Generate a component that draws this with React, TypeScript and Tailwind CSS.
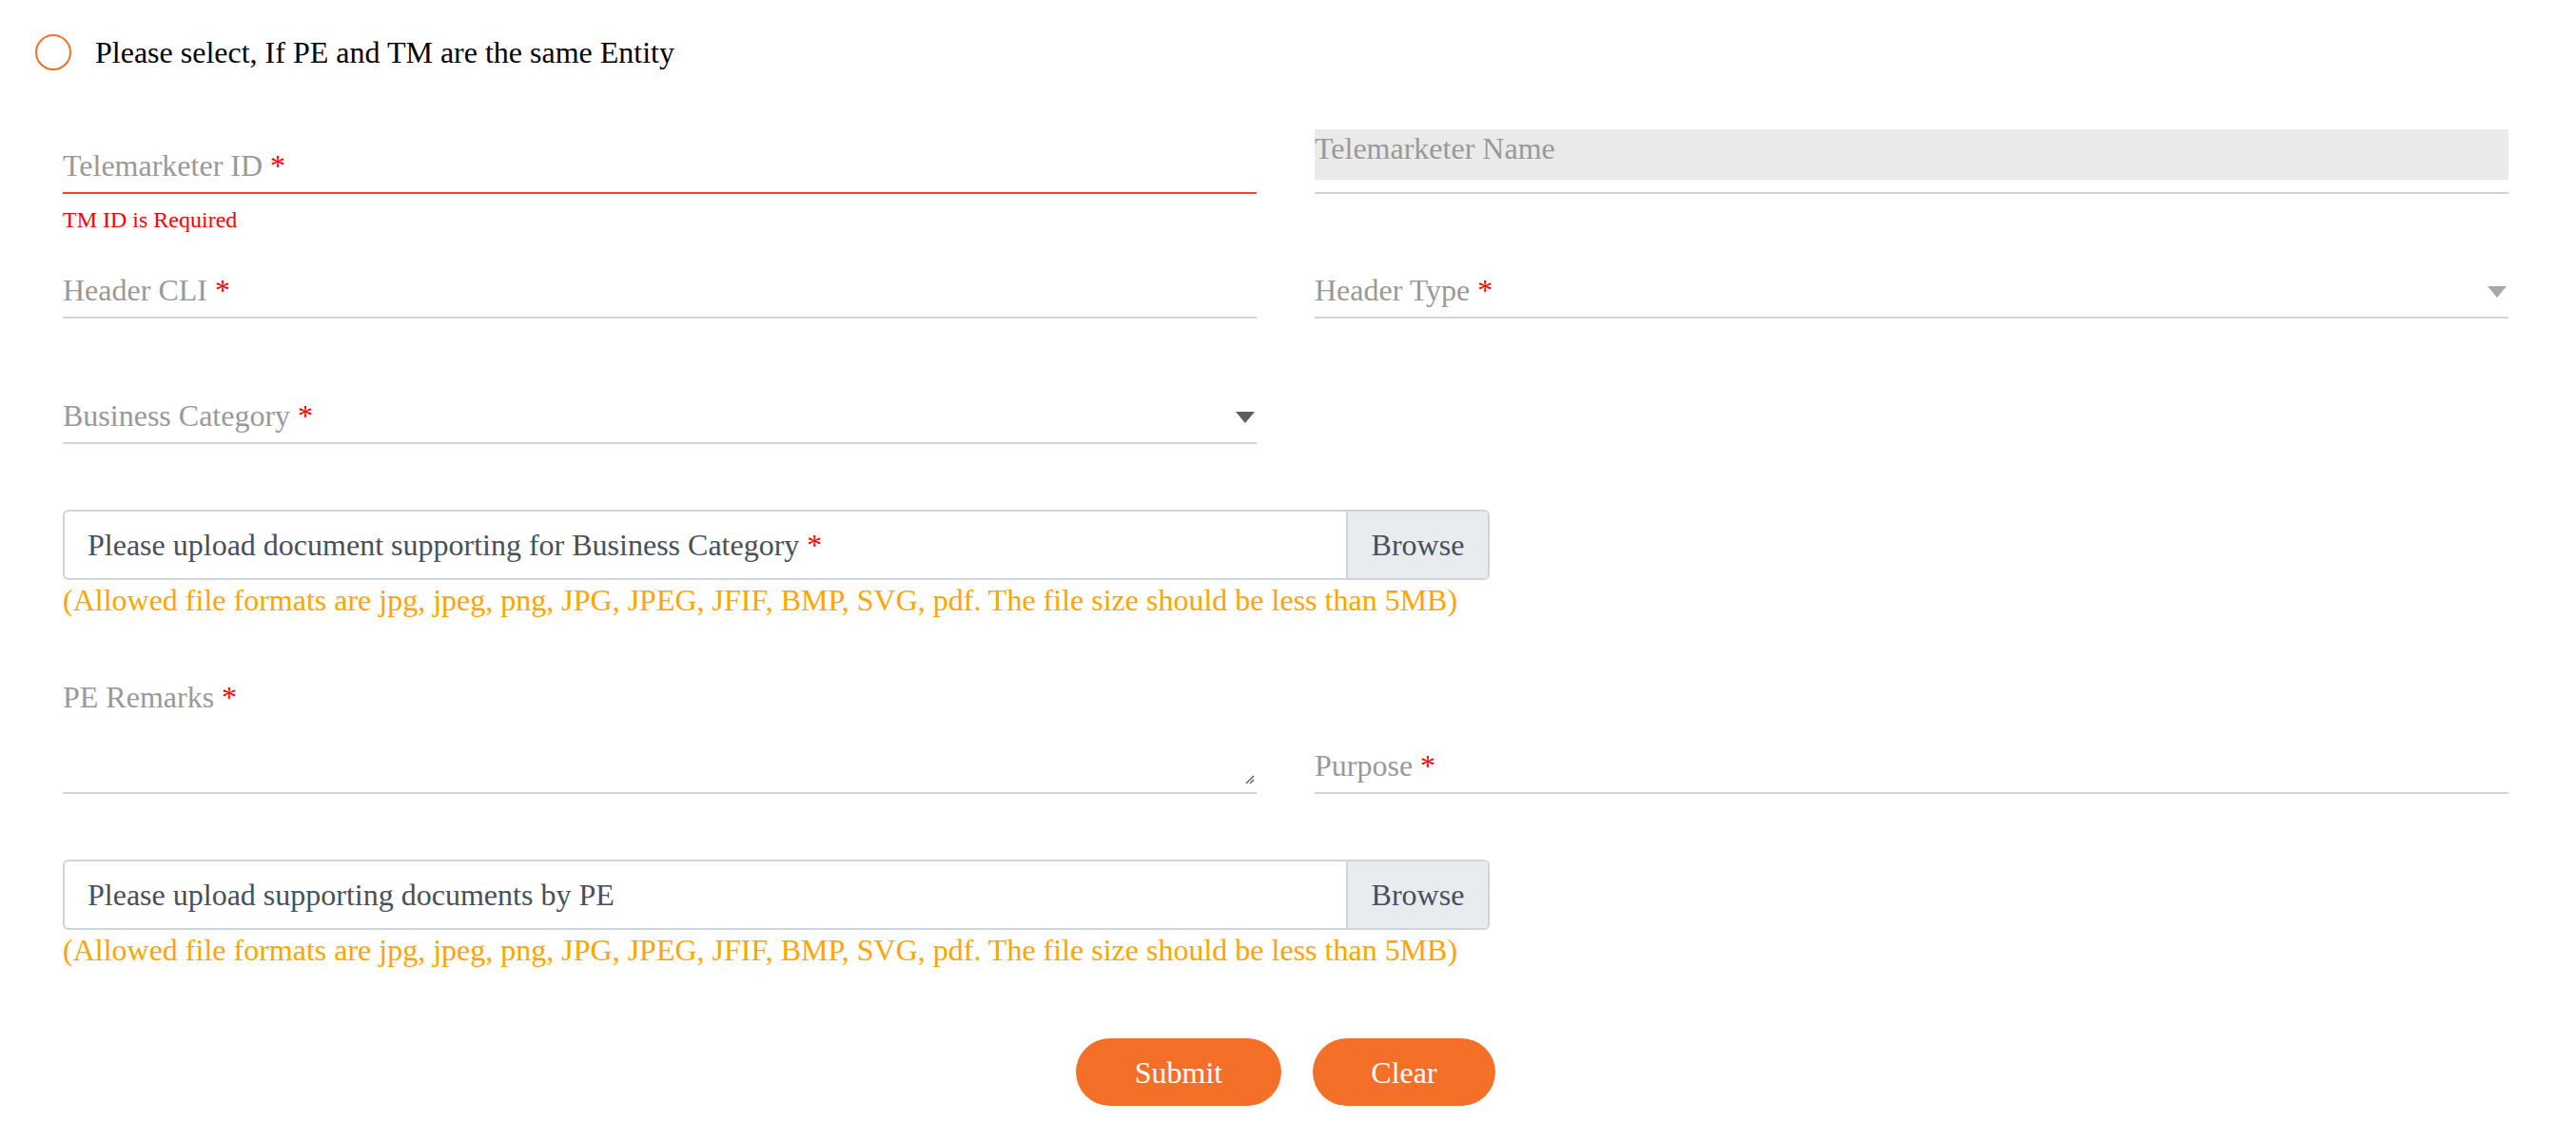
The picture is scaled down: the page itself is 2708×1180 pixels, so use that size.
const RED = "text-[#ff0000]";

function Req() {
  return (
    <>
      {" "}
      <span className={RED}>*</span>
    </>
  );
}

function LineField({
  label,
  required,
  arrow,
  arrowDark,
}: {
  label: string;
  required?: boolean;
  arrow?: boolean;
  arrowDark?: boolean;
}) {
  return (
    <div className="h-[71px] border-b-2 border-[#d3d3d3] flex items-end justify-between pb-[12px]">
      <span className="text-[32px] leading-none text-[#999999]">
        {label}
        {required && <Req />}
      </span>
      {arrow && (
        <svg width="20" height="12" viewBox="0 0 20 12" className="mr-[2px] mb-[8px]">
          <path d="M0 0 L20 0 L10 12 Z" fill={arrowDark ? "#5f5f5f" : "#a8a8a8"} />
        </svg>
      )}
    </div>
  );
}

function Upload({ text, required }: { text: string; required?: boolean }) {
  return (
    <div className="w-[1500px]">
      <div className="flex h-[74px] border-2 border-[#ced4da] rounded-[6px] overflow-hidden">
        <div className="flex-1 flex items-center pl-[24px] text-[32px] text-[#495057]">
          <span>
            {text}
            {required && <Req />}
          </span>
        </div>
        <div className="w-[149px] flex items-center justify-center bg-[#e9ecef] border-l-2 border-[#ced4da] text-[32px] text-[#495057]">
          Browse
        </div>
      </div>
      <div className="mt-[3px] text-[32px] leading-[36px] text-[#ffa500]">
        (Allowed file formats are jpg, jpeg, png, JPG, JPEG, JFIF, BMP, SVG, pdf. The file size should be less than 5MB)
      </div>
    </div>
  );
}

export default function App() {
  return (
    <div className="min-h-screen w-[2708px] bg-white font-['Liberation_Serif',serif]">
      {/* Radio */}
      <div className="pl-[37px] pt-[36px] flex items-center gap-[25px]">
        <span className="w-[38px] h-[38px] rounded-full border-2 border-[#f47029]" />
        <span className="text-[32px] leading-[38px] text-black">Please select, If PE and TM are the same Entity</span>
      </div>

      <div className="pl-[66px] pr-[71px]">
        {/* Row 1 */}
        <div className="grid grid-cols-2 gap-x-[61px] mt-[61px]">
          <div>
            <div className="h-[69px] border-b-2 border-[#f44336] flex items-end pb-[12px]">
              <span className="text-[32px] leading-none text-[#999999]">
                Telemarketer ID
                <Req />
              </span>
            </div>
            <div className="mt-[15px] text-[24px] leading-[24px] text-[#ff0000]">TM ID is Required</div>
          </div>
          <div className="pt-[1px]">
            <div className="h-[53px] bg-[#eaeaea] pt-[4px] text-[32px] leading-[32px] text-[#999999]">
              Telemarketer Name
            </div>
            <div className="mt-[13px] border-b-2 border-[#d3d3d3]" />
          </div>
        </div>

        {/* Row 2 */}
        <div className="grid grid-cols-2 gap-x-[61px] mt-[21px]">
          <LineField label="Header CLI" required />
          <LineField label="Header Type" required arrow />
        </div>

        {/* Row 3 */}
        <div className="grid grid-cols-2 gap-x-[61px] mt-[61px]">
          <LineField label="Business Category" required arrow arrowDark />
          <div />
        </div>

        <div className="mt-[69px]">
          <Upload text="Please upload document supporting for Business Category" required />
        </div>

        {/* Remarks / Purpose */}
        <div className="grid grid-cols-2 gap-x-[61px] mt-[68px] items-end">
          <div>
            <div className="text-[32px] leading-none text-[#999999]">
              PE Remarks
              <Req />
            </div>
            <div className="relative h-[86px] border-b-2 border-[#d3d3d3]">
              <svg width="12" height="12" viewBox="0 0 12 12" className="absolute right-[2px] bottom-[8px]">
                <path d="M11 3 L3 11 M11 7 L7 11" stroke="#555" strokeWidth="1.2" />
              </svg>
            </div>
          </div>
          <LineField label="Purpose" required />
        </div>

        <div className="mt-[69px]">
          <Upload text="Please upload supporting documents by PE" />
        </div>

        {/* Buttons */}
        <div className="flex justify-center gap-[33px] mt-[75px] pb-[18px]">
          <button className="w-[216px] h-[71px] rounded-full bg-[#f47029] text-white text-[32px]">Submit</button>
          <button className="w-[192px] h-[71px] rounded-full bg-[#f47029] text-white text-[32px]">Clear</button>
        </div>
      </div>
    </div>
  );
}
